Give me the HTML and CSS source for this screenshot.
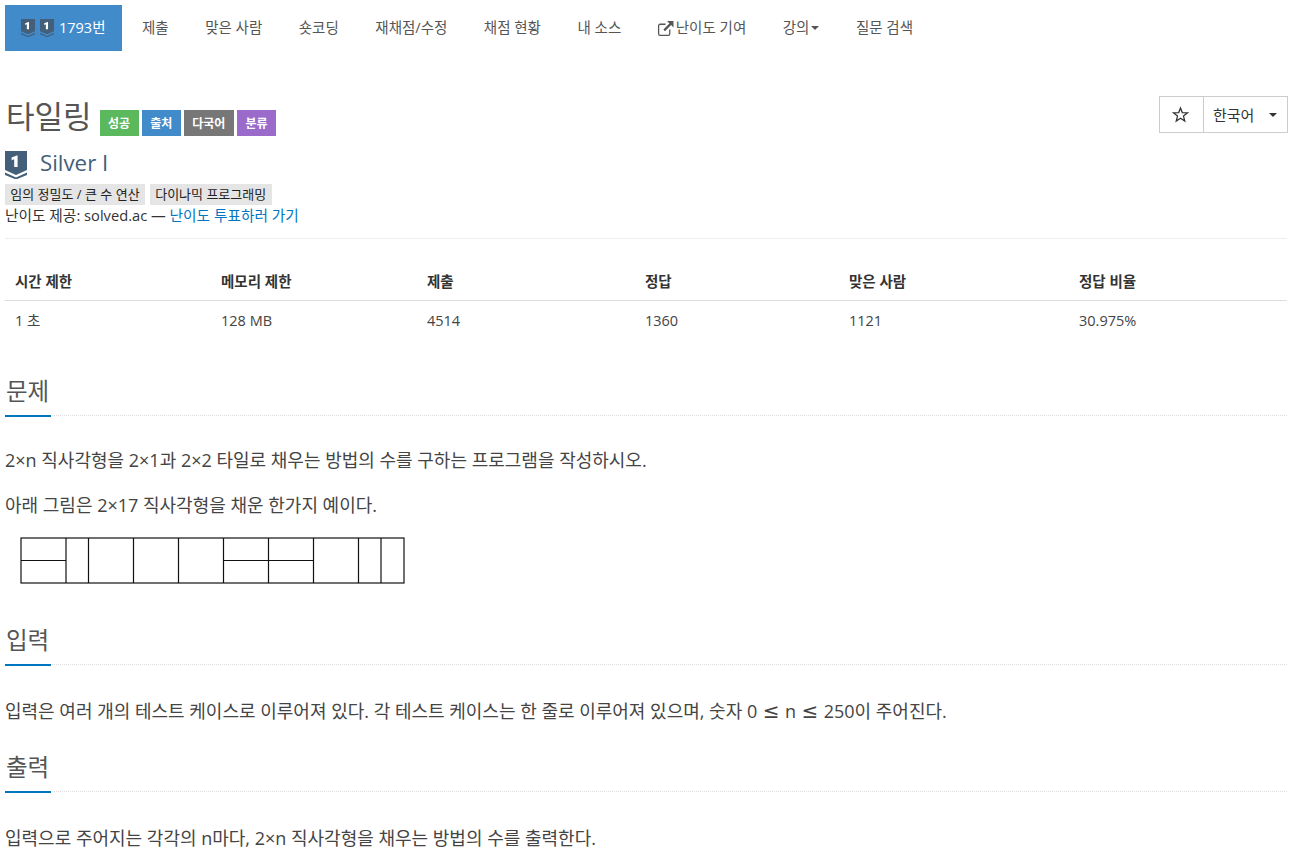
FILE: index.html
```html
<!DOCTYPE html>
<html lang="ko">
<head>
  <meta charset="UTF-8" />
  <meta name="viewport" content="width=device-width, initial-scale=1.0" />
  <title>1793번: 타일링</title>
  <link rel="stylesheet" href="styles.css">
</head>
<body>
  <svg class="icon-defs" width="0" height="0" aria-hidden="true">
    <defs>
      <symbol id="tier-silver-1" viewBox="0 0 22 28">
        <path d="M0 0H22V19L11 24L0 19Z" fill="#435f7a"/>
        <path d="M0 21.5L11 26.5L22 21.5V24L11 28.5L0 24Z" fill="#435f7a"/>
        <path d="M12.6 4.5V16H9.2V8.3L6.6 9.2V6.6L11.8 4.5Z" fill="#fff"/>
      </symbol>
    </defs>
  </svg>

  <nav class="problem-menu">
    <a class="menu-item active" href="#">
      <svg class="tier-small"><use href="#tier-silver-1"/></svg>
      <svg class="tier-small"><use href="#tier-silver-1"/></svg>
      <span>1793번</span>
    </a>
    <a class="menu-item" href="#">제출</a>
    <a class="menu-item" href="#">맞은 사람</a>
    <a class="menu-item" href="#">숏코딩</a>
    <a class="menu-item" href="#">재채점/수정</a>
    <a class="menu-item" href="#">채점 현황</a>
    <a class="menu-item" href="#">내 소스</a>
    <a class="menu-item" href="#">
      <svg class="ext-icon" viewBox="0 0 16 16"><path d="M12 9v4a1.500 1.500 0 0 1-1.500 1.500H3A1.500 1.500 0 0 1 1.500 13V5.500A1.500 1.500 0 0 1 3 4h5" fill="none" stroke="currentColor" stroke-width="1.200"/><path d="M9.500 1H15.500V7L13.300 4.800L7.500 10.500L6 9L11.700 3.200Z" fill="currentColor"/></svg>
      난이도 기여
    </a>
    <a class="menu-item" href="#">강의<i class="caret"></i></a>
    <a class="menu-item" href="#">질문 검색</a>
  </nav>

  <main class="page">
    <div class="title-row">
      <h1 class="problem-title">타일링</h1>
      <div class="labels">
        <span class="label green">성공</span>
        <span class="label blue">출처</span>
        <span class="label gray">다국어</span>
        <span class="label purple">분류</span>
      </div>
      <div class="title-actions">
        <button class="action-btn star">
          <svg class="star-icon" viewBox="0 0 16 16"><path d="M8 1.800L9.700 6.200L14.500 6.500L10.800 9.500L12 14.100L8 11.500L4 14.100L5.200 9.500L1.500 6.500L6.300 6.200Z" fill="none" stroke="currentColor" stroke-width="1.200"/></svg>
        </button>
        <button class="action-btn lang">한국어<i class="caret"></i></button>
      </div>
    </div>

    <div class="tier-row">
      <svg class="tier-big"><use href="#tier-silver-1"/></svg>
      <span class="tier-name">Silver I</span>
    </div>
    <div class="tags">
      <span class="tag">임의 정밀도 / 큰 수 연산</span>
      <span class="tag">다이나믹 프로그래밍</span>
    </div>
    <div class="credit">난이도 제공: solved.ac — <a href="#">난이도 투표하러 가기</a></div>

    <table class="info-table">
      <thead>
        <tr>
          <th class="col-time">시간 제한</th>
          <th class="col-mem">메모리 제한</th>
          <th class="col-sub">제출</th>
          <th class="col-ans">정답</th>
          <th class="col-ok">맞은 사람</th>
          <th>정답 비율</th>
        </tr>
      </thead>
      <tbody>
        <tr>
          <td>1 초</td>
          <td>128 MB</td>
          <td>4514</td>
          <td>1360</td>
          <td>1121</td>
          <td>30.975%</td>
        </tr>
      </tbody>
    </table>

    <section class="problem-section first">
      <div class="section-head"><h2>문제</h2></div>
      <p>2×n 직사각형을 2×1과 2×2 타일로 채우는 방법의 수를 구하는 프로그램을 작성하시오.</p>
      <p>아래 그림은 2×17 직사각형을 채운 한가지 예이다.</p>
      <svg class="tiling" viewBox="0 0 386 47" width="386" height="47" aria-label="타일링 예시">
        <g fill="none" stroke="#111" stroke-width="1.200">
          <rect x="1" y="1" width="383" height="45"/>
          <path d="M46 1V46M68.500 1V46M113.500 1V46M158.500 1V46M203.500 1V46M248.500 1V46M293.500 1V46M338.500 1V46M361 1V46"/>
          <path d="M1 23.500H46M203.500 23.500H293.500"/>
        </g>
      </svg>
    </section>

    <section class="problem-section">
      <div class="section-head"><h2>입력</h2></div>
      <p>입력은 여러 개의 테스트 케이스로 이루어져 있다. 각 테스트 케이스는 한 줄로 이루어져 있으며, 숫자 0 <span class="math-op">≤</span> n <span class="math-op">≤</span> 250이 주어진다.</p>
    </section>

    <section class="problem-section">
      <div class="section-head"><h2>출력</h2></div>
      <p>입력으로 주어지는 각각의 n마다, 2×n 직사각형을 채우는 방법의 수를 출력한다.</p>
    </section>
  </main>
</body>
</html>
```

FILE: styles.css
```css
* {
  box-sizing: border-box;
}

html, body {
  height: 100%;
}

body {
  margin: 0;
  background: #fff;
  color: #333;
  font-family: "Open Sans", "Noto Sans CJK KR", sans-serif;
  font-size: 14.5px;
  line-height: 20px;
  overflow: hidden;
}

a {
  text-decoration: none;
  color: inherit;
}

.icon-defs {
  position: absolute;
}

/* top menu */
.problem-menu {
  display: flex;
  padding: 5px 5px 0;
}

.menu-item {
  display: flex;
  align-items: center;
  height: 46px;
  padding: 0 18.25px;
  color: #555;
  white-space: nowrap;
}

.menu-item.active {
  width: 117px;
  margin-right: 1.7px;
  padding: 0 0 0 16px;
  background: #428bca;
  color: #fff;
  gap: 5px;
}

.tier-small {
  width: 14px;
  height: 18px;
  flex: none;
}

.ext-icon {
  width: 17px;
  height: 17px;
  margin: 0 2px 0 -1px;
}

.caret {
  display: inline-block;
  margin-left: 2px;
  border-top: 4px solid;
  border-left: 4px solid transparent;
  border-right: 4px solid transparent;
}

/* title */
.page {
  padding: 0 9px 0 5px;
}

.title-row {
  display: flex;
  align-items: flex-start;
  margin-top: 45px;
  height: 40px;
}

.problem-title {
  margin: 0 8px 0 1px;
  font-size: 31px;
  line-height: 40px;
  font-weight: 400;
  color: #555;
}

.labels {
  display: flex;
  gap: 3px;
  margin-top: 14px;
}

.label {
  padding: 0 8.5px;
  height: 26px;
  font-size: 12px;
  font-weight: 700;
  line-height: 27px;
  color: #fff;
}

.green { background: #5cb85c; }
.blue { background: #428bca; }
.gray { background: #777; }
.purple { background: #9b6bcc; }

.title-actions {
  display: flex;
  margin: 0 -1px 0 auto;
}

.action-btn {
  display: flex;
  align-items: center;
  height: 37px;
  border: 1px solid #ccc;
  background: #fff;
  color: #333;
  font-family: inherit;
  font-size: 15px;
  padding: 0;
}

.star {
  justify-content: center;
  width: 45px;
}

.star-icon {
  width: 17px;
  height: 17px;
  margin-right: 2px;
}

.lang {
  width: 85px;
  margin-left: -1px;
  padding-left: 9px;
}

.lang .caret {
  margin-left: 15px;
}

.tier-row {
  display: flex;
  align-items: center;
  gap: 13px;
  margin-top: 13px;
  height: 32px;
}

.tier-big {
  width: 22px;
  height: 28px;
}

.tier-name {
  margin-bottom: 4px;
  font-size: 22.3px;
  color: #435f7a;
}

.tags {
  display: flex;
  gap: 5px;
  margin-top: 3px;
}

.tag {
  padding: 0 5.3px;
  height: 21px;
  font-size: 13px;
  line-height: 21px;
  background: #e5e5e5;
  color: #222;
}

.credit {
  font-size: 14.7px;
  line-height: 21px;
  padding-bottom: 12px;
  border-bottom: 1px solid #eee;
}

.credit a {
  color: #0076c0;
}

/* info table */
.info-table {
  width: 100%;
  table-layout: fixed;
  border-collapse: collapse;
  margin-top: 22px;
}

.info-table th {
  text-align: left;
  font-weight: 700;
  padding: 11px 10px 8px;
  border-bottom: 1px solid #ddd;
  color: #333;
}

.info-table td {
  padding: 10px 10px 9px;
  color: #444;
}

.col-time, .col-mem { width: 206px; }
.col-sub { width: 218px; }
.col-ans { width: 204px; }
.col-ok { width: 230px; }

/* problem body */
.problem-section {
  margin-top: 22px;
}

.problem-section.first {
  margin-top: 31px;
}

.section-head {
  border-bottom: 1px dotted #ddd;
  height: 45px;
}

.section-head h2 {
  margin: 0;
  width: 46px;
  height: 46px;
  padding-left: 1px;
  font-size: 23.5px;
  line-height: 40px;
  font-weight: 400;
  white-space: nowrap;
  color: #555;
  border-bottom: 2px solid #0076c0;
}

.problem-section p {
  margin: 0 0 17px;
  font-size: 18px;
  line-height: 28px;
  color: #444;
}

.section-head + p {
  margin-top: 32px;
}

.first .section-head + p {
  margin-top: 30px;
}

.math-op {
  margin: 0 0.800px;
  font-family: "DejaVu Sans", sans-serif;
  font-size: 20px;
  line-height: 0;
}

.tiling {
  display: block;
  margin: 18px 0 36px 15px;
}
```
